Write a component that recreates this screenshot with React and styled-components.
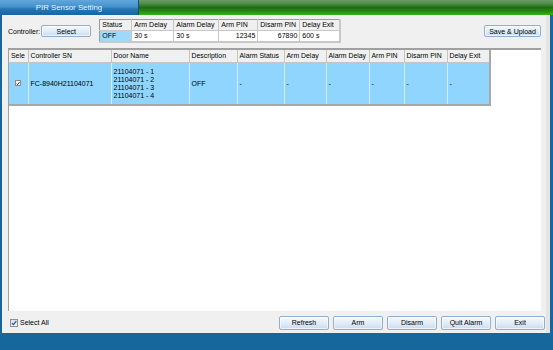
import React from 'react';
import styled, { createGlobalStyle } from 'styled-components';

const GlobalStyle = createGlobalStyle`
  html, body { margin: 0; padding: 0; background: #16679c; }
  body { font-family: "Liberation Sans", Arial, sans-serif; font-size: 7px; color: #000; }
  * { box-sizing: border-box; }
`;

const Window = styled.div`
  width: 553px;
  height: 350px;
  display: flex;
  flex-direction: column;
  background: #16679c;
  overflow: hidden;
`;

const TitleBar = styled.div`
  height: 15px;
  display: flex;
  flex: none;
`;

const TitleTab = styled.div`
  width: 139px;
  display: flex;
  align-items: center;
  justify-content: center;
  font-size: 7.8px;
  color: #eaf4fd;
  background: linear-gradient(#62a7dc 0%, #4491cc 45%, #2475b4 60%, #1a64a2 100%);
  border-right: 1px solid #0e4f86;
`;

const TitleFill = styled.div`
  flex: 1;
  background: linear-gradient(#6c9d6a 0%, #4d8c47 25%, #1d6d14 50%, #23860f 72%, #36b31b 100%);
`;

const Body = styled.div`
  flex: 1;
  display: flex;
  padding: 0 3px 0 2px;
  min-height: 0;
`;

const Panel = styled.div`
  flex: 1;
  background: #f0f0f0;
  display: flex;
  flex-direction: column;
  padding: 4px 1px 0 6px;
  border-right: 4px solid #e4e4e4;
`;

const ControllerRow = styled.div`
  display: flex;
  align-items: center;
  height: 24px;
  padding-right: 4px;
  flex: none;
`;

const Label = styled.span`
  margin-right: 1px;
`;

const Button = styled.button`
  width: ${p => p.$w || 50}px;
  height: ${p => p.$h || 14}px;
  padding: 0;
  font: inherit;
  font-size: 7px;
  color: #000;
  border: 1px solid #92aecb;
  border-radius: 2px;
  background: linear-gradient(#f4f8fc 0%, #e2edf8 50%, #c9dcf0 100%);
  box-shadow: inset 0 0 0 1px rgba(255, 255, 255, 0.6);
`;

const StatusTable = styled.table`
  margin-left: 8px;
  border-collapse: collapse;
  table-layout: fixed;
  border-top: 1px solid #9a9a9a;
  border-left: 1px solid #9a9a9a;
  border-right: 2px solid #c8c8c8;
  border-bottom: 2px solid #c8c8c8;
  background: #fff;

  th, td {
    height: 11px;
    padding: 0 2px;
    font-weight: normal;
    text-align: left;
    white-space: nowrap;
    border-right: 1px solid #c8c8c8;
    line-height: 10px;
  }
  th { background: #f0f0f0; border-bottom: 1px solid #c8c8c8; }
`;

const Cell = styled.td`
  text-align: ${p => (p.$right ? 'right' : 'left')} !important;
  background: ${p => (p.$hi ? '#9cd9fa' : 'transparent')};
`;

const Spacer = styled.div`
  flex: 1;
`;

const GridBox = styled.div`
  height: 263px;
  flex: none;
  margin-top: 5px;
  background: #fff;
  border-top: 2px solid #a0a0a0;
  border-left: 1px solid #a0a0a0;
  margin-right: 4px;
`;

const Grid = styled.table`
  border-collapse: collapse;
  table-layout: fixed;
  width: 481px;

  th, td {
    font-weight: normal;
    text-align: left;
    white-space: nowrap;
    overflow: hidden;
    padding: 0 0 0 2px;
  }
  th {
    height: 12px;
    background: #f0f0f0;
    border-right: 1px solid #c4c4c4;
    border-bottom: 1px solid #c4c4c4;
    font-size: 6.9px;
  }
  th:last-child { border-right: 2px solid #a8a8a8; }
  td {
    height: 43px;
    background: #8fd5fd;
    border-right: 1px solid #d6eefb;
    border-bottom: 2px solid #a8a8a8;
    vertical-align: middle;
  }
  td:last-child { border-right: 2px solid #a8a8a8; }
`;

const DoorLines = styled.div`
  display: flex;
  flex-direction: column;
  line-height: 8px;
  padding-top: 1px;
`;

const RowCheck = styled.span`
  display: inline-flex;
  width: 6px;
  height: 6px;
  margin-left: 4px;
  background: #fff;
  border: 1px solid #8a8a8a;
  align-items: center;
  justify-content: center;
`;

const Footer = styled.div`
  display: flex;
  align-items: center;
  height: 22px;
  flex: none;
  padding-top: 1px;
`;

const SelectAll = styled.label`
  display: flex;
  align-items: center;
  gap: 2px;
  margin-left: 2px;
`;

const BigCheck = styled.span`
  width: 8px;
  height: 8px;
  display: inline-flex;
  align-items: center;
  justify-content: center;
  border: 1px solid #8e8f8f;
  background: linear-gradient(#dde3ea, #f3f5f8);
`;

const ButtonRow = styled.div`
  margin-left: auto;
  display: flex;
  gap: 4px;
`;

const BottomBand = styled.div`
  height: 17px;
  flex: none;
  background: #16679c;
`;

const Tick = ({ size = 5, color = '#000' }) => (
  <svg width={size} height={size} viewBox="0 0 10 10">
    <path d="M1.5 5.2 L4 7.8 L8.8 1.8" fill="none" stroke={color} strokeWidth="2" />
  </svg>
);

const statusCols = [
  ['Status', 32, 'OFF', false, true],
  ['Arm Delay', 42, '30 s'],
  ['Alarm Delay', 45, '30 s'],
  ['Arm PIN', 39, '12345', true],
  ['Disarm PIN', 42, '67890', true],
  ['Delay Exit', 40, '600 s'],
];

const gridCols = [
  ['Sele', 19],
  ['Controller SN', 83],
  ['Door Name', 78],
  ['Description', 48],
  ['Alarm Status', 47],
  ['Arm Delay', 42],
  ['Alarm Delay', 43],
  ['Arm PIN', 35],
  ['Disarm PIN', 43],
  ['Delay Exit', 43],
];

const doors = ['21104071 - 1', '21104071 - 2', '21104071 - 3', '21104071 - 4'];

export default function App() {
  return (
    <Window>
      <GlobalStyle />
      <TitleBar>
        <TitleTab>PIR Sensor Setting</TitleTab>
        <TitleFill />
      </TitleBar>
      <Body>
        <Panel>
          <ControllerRow>
            <Label>Controller:</Label>
            <Button $w={50} $h={12}>Select</Button>
            <StatusTable>
              <colgroup>
                {statusCols.map(([n, w]) => <col key={n} style={{ width: w }} />)}
              </colgroup>
              <thead>
                <tr>{statusCols.map(([n]) => <th key={n}>{n}</th>)}</tr>
              </thead>
              <tbody>
                <tr>
                  {statusCols.map(([n, , v, right, hi]) => (
                    <Cell key={n} $right={right} $hi={hi}>{v}</Cell>
                  ))}
                </tr>
              </tbody>
            </StatusTable>
            <Spacer />
            <Button $w={57} $h={12}>Save &amp; Upload</Button>
          </ControllerRow>
          <GridBox>
            <Grid>
              <colgroup>
                {gridCols.map(([n, w], i) => <col key={i} style={{ width: w }} />)}
              </colgroup>
              <thead>
                <tr>{gridCols.map(([n], i) => <th key={i}>{n}</th>)}</tr>
              </thead>
              <tbody>
                <tr>
                  <td><RowCheck><Tick size={5} /></RowCheck></td>
                  <td>FC-8940H21104071</td>
                  <td>
                    <DoorLines>
                      {doors.map(d => <span key={d}>{d}</span>)}
                    </DoorLines>
                  </td>
                  <td>OFF</td>
                  <td>-</td>
                  <td>-</td>
                  <td>-</td>
                  <td>-</td>
                  <td>-</td>
                  <td>-</td>
                </tr>
              </tbody>
            </Grid>
          </GridBox>
          <Footer>
            <SelectAll>
              <BigCheck><Tick size={6} color="#2a4aa0" /></BigCheck>
              Select All
            </SelectAll>
            <ButtonRow>
              <Button>Refresh</Button>
              <Button>Arm</Button>
              <Button>Disarm</Button>
              <Button>Quit Alarm</Button>
              <Button>Exit</Button>
            </ButtonRow>
          </Footer>
        </Panel>
      </Body>
      <BottomBand />
    </Window>
  );
}
